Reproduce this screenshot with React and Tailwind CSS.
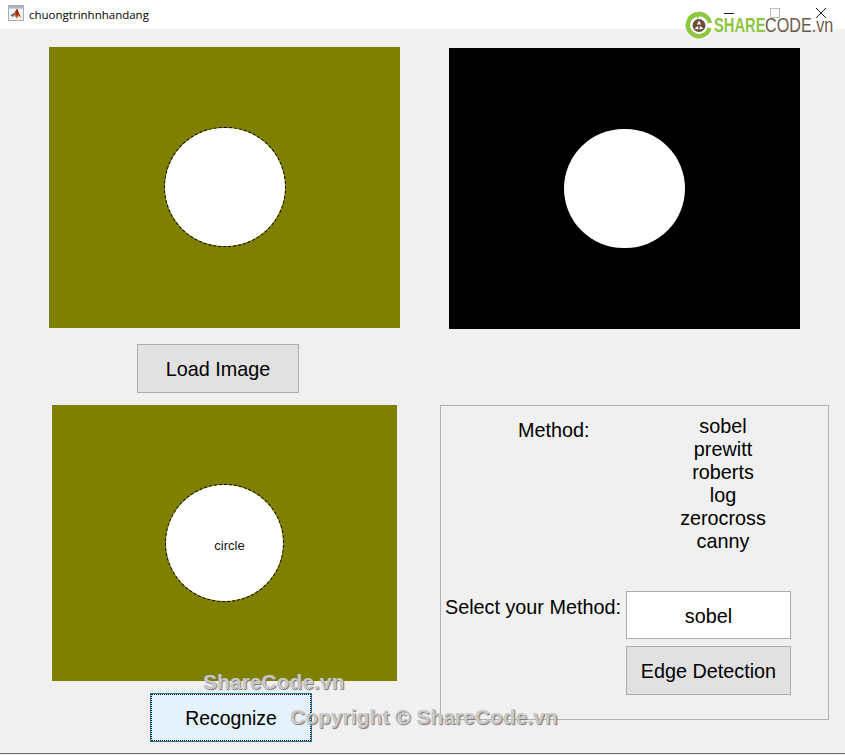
import React from 'react';

// figure image: coloured backdrop with a centred white disc
function Blob({ className, discClass, children }) {
  return (
    <div className={`flex items-center justify-center ${className}`}>
      <div className={`rounded-full bg-white flex items-center justify-center ${discClass}`}>
        {children}
      </div>
    </div>
  );
}

function GuiButton({ className, children }) {
  return (
    <div className={`flex items-center justify-center pt-[2px] text-black ${className}`}>
      {children}
    </div>
  );
}

function MatlabIcon() {
  return (
    <svg width="16" height="16" viewBox="0 0 16 16" className="mb-[3px]">
      <rect x="0.5" y="0.5" width="15" height="15" fill="#f1f3f5" stroke="#a4acb5" />
      <rect x="1" y="1" width="14" height="2.5" fill="#aeb6bf" />
      <path d="M2.5 10.5 L6 8 L9 3.5 L13.5 13 L11 11 L8.5 13.5 L6.5 10 Z" fill="#cf5a1e" />
      <path d="M9 3.5 L11 8.5 L9 11 L7.5 8 Z" fill="#8e2f18" />
      <path d="M2.5 10.5 L6 8 L6.5 10 L5 12 Z" fill="#3f6f9a" />
    </svg>
  );
}

function ShareCodeLogo() {
  return (
    <div className="absolute left-[684px] top-[10px] flex items-center">
      <svg width="30" height="30" viewBox="0 0 30 30">
        <circle cx="15" cy="15" r="14.5" fill="#ffffff" />
        <path d="M12 4.5 A11 11 0 1 0 25.5 18" fill="none" stroke="#8dc63f" strokeWidth="4.5" />
        <path d="M15 4 A11 11 0 0 1 26 13" fill="none" stroke="#8dc63f" strokeWidth="4.5" />
        <path d="M10 2.5 L17 1.5 L14 9 Z" fill="#8dc63f" />
        <circle cx="15" cy="15.5" r="6.5" fill="#6b4f3a" />
        <path d="M15 10.5 L17 14.5 L13 14.5 Z M10.5 18.5 L14 16 L14.5 19.5 Z M19.5 18.5 L16 16 L15.5 19.5 Z" fill="#ffffff" />
      </svg>
      <div className="flex whitespace-nowrap mb-[2px] text-[21px] leading-none [text-shadow:0_0_2px_#ffffff,0_0_2px_#ffffff]">
        <div className="w-[51px]">
          <span className="inline-block origin-left scale-x-[0.7] font-bold text-[#8dc63f]">SHARE</span>
        </div>
        <div className="w-[68px]">
          <span className="inline-block origin-left scale-x-[0.77] text-[#6b5a48]">CODE.vn</span>
        </div>
      </div>
    </div>
  );
}

export default function App() {
  return (
    <div className="relative w-[845px] h-[755px] overflow-hidden bg-[#f0f0f0] font-['Liberation_Sans',Arial,sans-serif]">
      {/* title bar */}
      <div className="h-[29px] bg-white flex items-center">
        <div className="ml-[8px] flex items-center gap-[5px]">
          <MatlabIcon />
          <span className="text-[11.5px] text-black font-['Open_Sans',sans-serif]">chuongtrinhnhandang</span>
        </div>
        <div className="ml-auto flex items-center mb-[3px]">
          <svg width="12" height="12" viewBox="0 0 12 12" className="mr-[34px]"><path d="M1 6.5h10" stroke="#222" /></svg>
          <svg width="12" height="12" viewBox="0 0 12 12" className="mr-[34px] opacity-40"><rect x="1.5" y="1.5" width="9" height="9" fill="none" stroke="#555" /></svg>
          <svg width="12" height="12" viewBox="0 0 12 12" className="mr-[18px]"><path d="M1 1l10 10M11 1L1 11" stroke="#222" /></svg>
        </div>
      </div>

      {/* top row */}
      <div className="flex pl-[49px] pt-[18px]">
        <Blob className="w-[351px] h-[281px] bg-[#808000]" discClass="w-[122px] h-[120px] mb-[1px] border border-dashed border-black bg-clip-padding" />
        <Blob className="w-[351px] h-[281px] mt-[1px] ml-[49px] bg-black" discClass="w-[121px] h-[119px]" />
      </div>

      <div className="pl-[137px] pt-[15px]">
        <GuiButton className="w-[162px] h-[49px] text-[19.8px] bg-[#e1e1e1] border border-[#adadad]">Load Image</GuiButton>
      </div>

      {/* bottom row */}
      <div className="flex pt-[12px]">
        <div className="pl-[52px] w-[440px]">
          <Blob className="w-[345px] h-[276px] bg-[#808000]" discClass="w-[119px] h-[118px] border border-dashed border-black bg-clip-padding">
            <span className="text-[13px] text-[#111] ml-[10px] mt-[5px]">circle</span>
          </Blob>
          <GuiButton className="ml-[98px] mt-[12px] w-[162px] h-[49px] text-[19.4px] bg-[#e5f1fb] border border-[#1f7a9c] outline-1 outline-dotted outline-black -outline-offset-2">
            Recognize
          </GuiButton>
        </div>

        {/* method panel */}
        <div className="w-[389px] h-[315px] border border-[#b0b0b0] text-[19.8px] leading-[23px] text-black">
          <div className="flex pt-[9px]">
            <div className="ml-[77px] mt-[4px] w-[162px]">Method:</div>
            <div className="w-[86px] text-center flex flex-col">
              <span>sobel</span>
              <span>prewitt</span>
              <span>roberts</span>
              <span>log</span>
              <span>zerocross</span>
              <span>canny</span>
            </div>
          </div>
          <div className="flex mt-[38px]">
            <div className="ml-[4px] w-[181px] mt-[5px] whitespace-nowrap">Select your Method:</div>
            <div className="w-[165px] h-[48px] pt-[2px] bg-white border border-[#adadad] flex items-center justify-center">sobel</div>
          </div>
          <GuiButton className="ml-[185px] mt-[7px] w-[165px] h-[49px] bg-[#e1e1e1] border border-[#adadad]">
            Edge Detection
          </GuiButton>
        </div>
      </div>

      <div className="absolute left-0 right-0 top-[753px] h-[2px] border-t border-[#6d6d6d] bg-[#f0f0f0]" />

      {/* watermarks */}
      <ShareCodeLogo />
      <span className="absolute left-[203px] top-[666px] text-[21px] font-bold text-[#c8c8c8] [text-shadow:1px_1px_1px_#777]">ShareCode.vn</span>
      <span className="absolute left-[290px] top-[701px] text-[21px] font-bold text-[#c8c8c8] [text-shadow:1px_1px_1px_#777]">Copyright © ShareCode.vn</span>
    </div>
  );
}
